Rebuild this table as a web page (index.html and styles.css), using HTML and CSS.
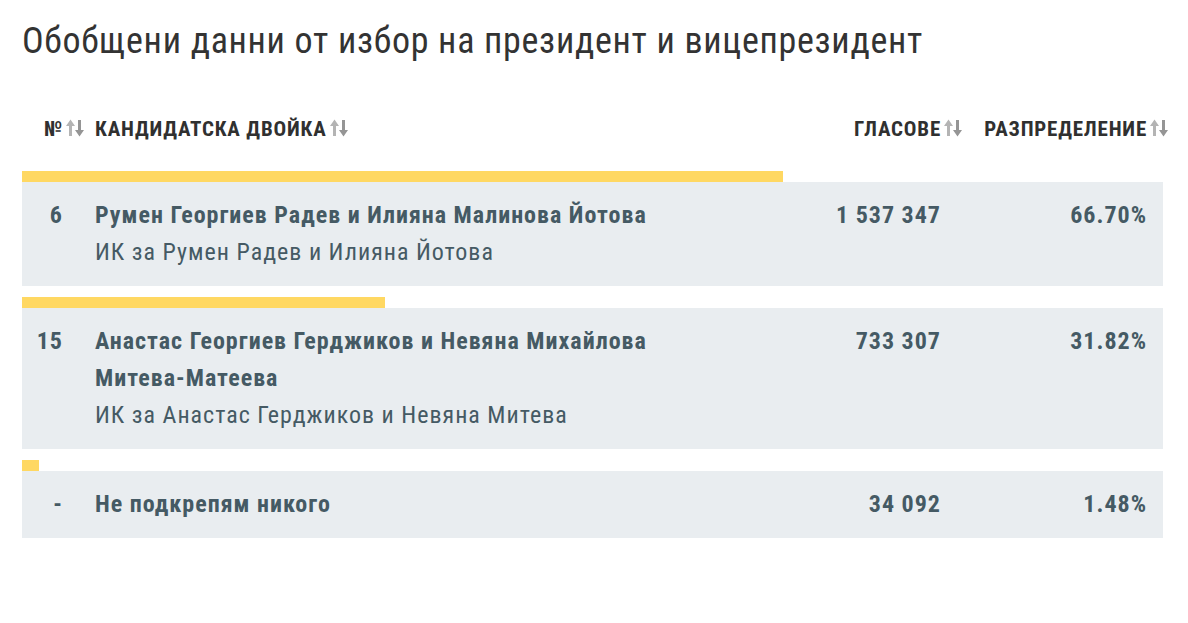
FILE: index.html
```html
<!DOCTYPE html>
<html lang="bg">
<head>
  <meta charset="UTF-8" />
  <title>Обобщени данни</title>
  <link rel="stylesheet" href="styles.css">
</head>
<body>

  <h1 class="title">Обобщени данни от избор на президент и вицепрезидент</h1>

  <div class="results">
    <div class="head">
      <div class="col-num">№<svg class="sort" viewBox="0 0 18 18"><path class="up" d="M0 7L4.5 0.5L9 7H6V17H3V7Z"/><path class="down" d="M12 1H15V11H18L13.5 17.5L9 11H12Z"/></svg></div>
      <div class="col-name">КАНДИДАТСКА ДВОЙКА<svg class="sort" viewBox="0 0 18 18"><path class="up" d="M0 7L4.5 0.5L9 7H6V17H3V7Z"/><path class="down" d="M12 1H15V11H18L13.5 17.5L9 11H12Z"/></svg></div>
      <div class="col-votes">ГЛАСОВЕ<svg class="sort" viewBox="0 0 18 18"><path class="up" d="M0 7L4.5 0.5L9 7H6V17H3V7Z"/><path class="down" d="M12 1H15V11H18L13.5 17.5L9 11H12Z"/></svg></div>
      <div class="col-pct">РАЗПРЕДЕЛЕНИЕ<svg class="sort" viewBox="0 0 18 18"><path class="up" d="M0 7L4.5 0.5L9 7H6V17H3V7Z"/><path class="down" d="M12 1H15V11H18L13.5 17.5L9 11H12Z"/></svg></div>
    </div>

    <div class="item">
      <div class="bar" style="width: 66.70%"></div>
      <div class="row">
        <div class="col-num">6</div>
        <div class="col-name">
          <div class="name">Румен Георгиев Радев и Илияна Малинова Йотова</div>
          <div class="party">ИК за Румен Радев и Илияна Йотова</div>
        </div>
        <div class="col-votes">1 537 347</div>
        <div class="col-pct">66.70%</div>
      </div>
    </div>

    <div class="item">
      <div class="bar" style="width: 31.82%"></div>
      <div class="row">
        <div class="col-num">15</div>
        <div class="col-name">
          <div class="name">Анастас Георгиев Герджиков и Невяна Михайлова Митева-Матеева</div>
          <div class="party">ИК за Анастас Герджиков и Невяна Митева</div>
        </div>
        <div class="col-votes">733 307</div>
        <div class="col-pct">31.82%</div>
      </div>
    </div>

    <div class="item">
      <div class="bar" style="width: 1.48%"></div>
      <div class="row">
        <div class="col-num">-</div>
        <div class="col-name">
          <div class="name">Не подкрепям никого</div>
        </div>
        <div class="col-votes">34 092</div>
        <div class="col-pct">1.48%</div>
      </div>
    </div>
  </div>

</body>
</html>
```

FILE: styles.css
```css
body {
  margin: 0;
  padding: 0 25px 0 22px;
  background-color: #fff;
  font-family: "Roboto Condensed", Roboto, "Liberation Sans", sans-serif;
  color: #333;
}
.title {
  margin: 0;
  padding-top: 20px;
  font-size: 36px;
  font-weight: 400;
  line-height: 42px;
  letter-spacing: 0.7px;
  color: #333;
}
.head, .row {
  display: grid;
  grid-template-columns: 41px 640px 174px 1fr;
  column-gap: 32px;
  padding-right: 16px;
}
.head {
  margin-top: 45px;
  margin-bottom: 20px;
  height: 44px;
  align-items: center;
  font-size: 21px;
  font-weight: 700;
  letter-spacing: 0.8px;
  color: #303030;
}
.col-num, .col-votes, .col-pct {
  text-align: right;
  white-space: nowrap;
}
.sort {
  width: 18px;
  height: 18px;
  margin-left: 3px;
  vertical-align: -1px;
}
.head .col-num .sort, .head .col-votes .sort, .head .col-pct .sort {
  margin-right: -21px;
}
.sort .up {
  fill: #b4b4b4;
}
.sort .down {
  fill: #959595;
}
.item {
  margin-top: 11px;
}
.bar {
  height: 11px;
  background-color: #ffd862;
}
.row {
  padding-top: 15px;
  padding-bottom: 15px;
  background-color: #e9edf0;
  font-size: 24px;
  line-height: 37px;
  letter-spacing: 1px;
  color: #455a64;
}
.row .col-num, .row .col-votes, .row .col-pct, .name {
  font-weight: 700;
}
.party {
  font-weight: 400;
}
```
